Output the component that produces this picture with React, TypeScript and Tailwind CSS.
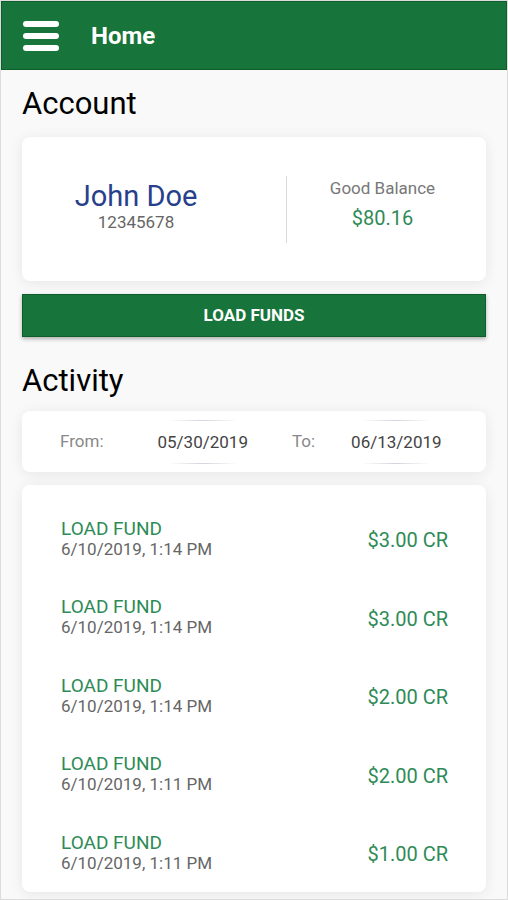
import React from 'react';

const items = [
  { date: '6/10/2019, 1:14 PM', amount: '$3.00 CR' },
  { date: '6/10/2019, 1:14 PM', amount: '$3.00 CR' },
  { date: '6/10/2019, 1:14 PM', amount: '$2.00 CR' },
  { date: '6/10/2019, 1:11 PM', amount: '$2.00 CR' },
  { date: '6/10/2019, 1:11 PM', amount: '$1.00 CR' },
];

function DateField({ value }: { value: string }) {
  return (
    <div className="flex flex-col items-center">
      <div className="h-px w-[70px] bg-gradient-to-r from-transparent via-gray-300 to-transparent" />
      <div className="py-[10px] text-[17px] leading-[22px] text-[#444]">{value}</div>
      <div className="h-px w-[70px] bg-gradient-to-r from-transparent via-gray-300 to-transparent" />
    </div>
  );
}

export default function App() {
  return (
    <div className="h-[900px] w-[508px] overflow-hidden border border-[#dcdcdc] bg-[#f9f9f9] font-['Roboto',sans-serif]">
      <header className="flex h-[69px] items-center border border-[#0f5c2c] bg-[#17743b] pl-[21px]">
        <div className="flex w-[36px] flex-col gap-[6px]">
          <span className="h-[6px] rounded-full bg-white" />
          <span className="h-[6px] rounded-full bg-white" />
          <span className="h-[6px] rounded-full bg-white" />
        </div>
        <h1 className="ml-[32px] text-[24px] font-bold text-white">Home</h1>
      </header>

      <main className="px-[21px]">
        <h2 className="mt-[16px] text-[31px] leading-[36px] text-black">Account</h2>

        <section className="mt-[15px] flex h-[144px] items-center rounded-lg bg-white shadow-[0_2px_14px_rgba(0,0,0,0.08)]">
          <div className="flex w-[228px] flex-col items-center pb-[6px]">
            <div className="text-[29px] leading-[32px] text-[#283f8c]">John Doe</div>
            <div className="text-[17px] leading-[20px] text-[#666]">12345678</div>
          </div>
          <div className="ml-[36px] h-[67px] w-px bg-[#d8d8d8]" />
          <div className="flex flex-1 flex-col items-center gap-[8px] pb-[10px] pr-[8px]">
            <div className="text-[17px] leading-[20px] text-[#777]">Good Balance</div>
            <div className="text-[20px] leading-[24px] text-[#2e8b57]">$80.16</div>
          </div>
        </section>

        <button className="mt-[13px] flex h-[43px] w-full items-center justify-center border border-[#0f5c2c] bg-[#17743b] text-[17px] font-bold text-white shadow-[0_2px_4px_rgba(0,0,0,0.3)]">
          LOAD FUNDS
        </button>

        <h2 className="mt-[26px] text-[31px] leading-[36px] text-black">Activity</h2>

        <section className="mt-[12px] flex h-[61px] items-center rounded-lg bg-white shadow-[0_2px_14px_rgba(0,0,0,0.08)]">
          <div className="ml-[38px] text-[17px] text-[#888]">From:</div>
          <div className="ml-[54px]">
            <DateField value="05/30/2019" />
          </div>
          <div className="ml-[44px] text-[17px] text-[#888]">To:</div>
          <div className="ml-[36px]">
            <DateField value="06/13/2019" />
          </div>
        </section>

        <section className="mt-[13px] rounded-lg bg-white pt-[14px] shadow-[0_2px_14px_rgba(0,0,0,0.08)]">
          {items.map((it, i) => (
            <div key={i} className="flex h-[78.5px] items-center justify-between pl-[39px] pr-[38px]">
              <div className="flex flex-col">
                <div className="text-[19px] leading-[21px] text-[#2e8b57]">LOAD FUND</div>
                <div className="text-[17px] leading-[20px] text-[#666]">{it.date}</div>
              </div>
              <div className="pt-[4px] text-[20px] leading-[24px] text-[#2e8b57]">{it.amount}</div>
            </div>
          ))}
        </section>
      </main>
    </div>
  );
}
